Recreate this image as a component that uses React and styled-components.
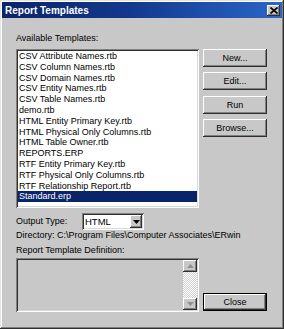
import React from "react";
import styled, { createGlobalStyle } from "styled-components";

const BG = "#c8c8c8";

const Global = createGlobalStyle`
  html, body { margin: 0; padding: 0; background: ${BG}; }
  body { font-family: "Liberation Sans", Arial, sans-serif; }
  * { box-sizing: border-box; }
`;

const Dialog = styled.div`
  width: 284px;
  height: 329px;
  background: ${BG};
  padding: 2px;
  box-shadow: inset -1px -1px #303030, inset 1px 1px #e4e4e4,
    inset -2px -2px #808080, inset 2px 2px #ffffff;
  display: flex;
  flex-direction: column;
`;

const TitleBar = styled.div`
  height: 16px;
  display: flex;
  align-items: center;
  justify-content: space-between;
  padding: 0 2px 0 3px;
  background: linear-gradient(to right, #0a246a 0%, #12388c 45%, #2a66c8 100%);
  color: #fff;
  font-weight: bold;
  font-size: 10px;
`;

const CloseBox = styled.div`
  width: 13px;
  height: 11px;
  background: ${BG};
  box-shadow: inset -1px -1px #303030, inset 1px 1px #ffffff,
    inset -2px -2px #808080;
  display: flex;
  align-items: center;
  justify-content: center;
`;

const Body = styled.div`
  display: flex;
  padding: 15px 0 0 14px;
  font-size: 9px;
  color: #000;
`;

const LeftCol = styled.div`
  width: 183px;
  display: flex;
  flex-direction: column;
`;

const Label = styled.div`
  line-height: 11px;
  height: 11px;
  white-space: nowrap;
  margin-top: ${(p) => p.$mt || 0}px;
`;

const Sunken = styled.div`
  background: ${(p) => p.$bg || "#fff"};
  padding: 2px;
  box-shadow: inset 1px 1px #808080, inset -1px -1px #ffffff,
    inset 2px 2px #303030, inset -2px -2px #d8d8d8;
`;

const List = styled(Sunken)`
  margin-top: 5px;
  height: 159px;
  overflow: hidden;
`;

const Item = styled.div`
  height: 10.8px;
  line-height: 10.8px;
  padding-left: 1px;
  white-space: nowrap;
  background: ${(p) => (p.$sel ? "#0a246a" : "transparent")};
  color: ${(p) => (p.$sel ? "#fff" : "#000")};
`;

const OutputRow = styled.div`
  margin-top: 5px;
  height: 17px;
  display: flex;
  align-items: center;
`;

const OutLabel = styled.div`
  width: 66px;
  line-height: 11px;
`;

const Select = styled(Sunken)`
  width: 62px;
  height: 17px;
  display: flex;
  align-items: stretch;
  padding: 2px;
`;

const SelectText = styled.div`
  flex: 1;
  padding-left: 1px;
  font-size: 9.5px;
  line-height: 13px;
`;

const Raised = styled.div`
  background: ${BG};
  box-shadow: inset -1px -1px #303030, inset 1px 1px #ffffff,
    inset -2px -2px #808080;
`;

const ArrowBtn = styled(Raised)`
  width: 12px;
  display: flex;
  align-items: center;
  justify-content: center;
`;

const TextBox = styled(Sunken)`
  margin-top: 2px;
  height: 54px;
  display: flex;
  justify-content: flex-end;
`;

const ScrollBar = styled.div`
  width: 14px;
  display: flex;
  flex-direction: column;
  background: repeating-conic-gradient(#ffffff 0 25%, #d0d0d0 0 50%) 0 0 / 2px 2px;
`;

const ScrollBtn = styled(Raised)`
  height: 12px;
  display: flex;
  align-items: center;
  justify-content: center;
`;

const Track = styled.div`
  flex: 1;
`;

const RightCol = styled.div`
  width: 64px;
  margin-left: 4px;
  padding-top: 16px;
  display: flex;
  flex-direction: column;
  gap: 5.4px;
`;

const Button = styled(Raised)`
  height: 18px;
  display: flex;
  align-items: center;
  justify-content: center;
  font-size: 9px;
  margin-top: ${(p) => (p.$bottom ? "auto" : "0")};
  margin-bottom: ${(p) => (p.$bottom ? "1px" : "0")};
  ${(p) =>
    p.$default &&
    `box-shadow: inset 0 0 0 1px #000, inset -2px -2px #303030, inset 2px 2px #ffffff, inset -3px -3px #808080;`}
`;

const Tri = ({ dir = "down", color = "#000" }) => (
  <svg width="7" height="4" viewBox="0 0 7 4">
    {dir === "down" ? (
      <polygon points="0,0 7,0 3.5,4" fill={color} />
    ) : (
      <polygon points="0,4 7,4 3.5,0" fill={color} />
    )}
  </svg>
);

const items = [
  "CSV Attribute Names.rtb",
  "CSV Column Names.rtb",
  "CSV Domain Names.rtb",
  "CSV Entity Names.rtb",
  "CSV Table Names.rtb",
  "demo.rtb",
  "HTML Entity Primary Key.rtb",
  "HTML Physical Only Columns.rtb",
  "HTML Table Owner.rtb",
  "REPORTS.ERP",
  "RTF Entity Primary Key.rtb",
  "RTF Physical Only Columns.rtb",
  "RTF Relationship Report.rtb",
  "Standard.erp",
];

export default function App() {
  return (
    <>
      <Global />
      <Dialog>
        <TitleBar>
          <span>Report Templates</span>
          <CloseBox>
            <svg width="8" height="7" viewBox="0 0 8 7">
              <path d="M0.5 0.5 L7.5 6.5 M7.5 0.5 L0.5 6.5" stroke="#000" strokeWidth="1.6" />
            </svg>
          </CloseBox>
        </TitleBar>
        <Body>
          <LeftCol>
            <Label>Available Templates:</Label>
            <List>
              {items.map((t) => (
                <Item key={t} $sel={t === "Standard.erp"}>
                  {t}
                </Item>
              ))}
            </List>
            <OutputRow>
              <OutLabel>Output Type:</OutLabel>
              <Select>
                <SelectText>HTML</SelectText>
                <ArrowBtn>
                  <Tri />
                </ArrowBtn>
              </Select>
            </OutputRow>
            <Label>Directory: C:\Program Files\Computer Associates\ERwin</Label>
            <Label $mt={4}>Report Template Definition:</Label>
            <TextBox $bg={BG}>
              <ScrollBar>
                <ScrollBtn>
                  <Tri dir="up" color="#909090" />
                </ScrollBtn>
                <Track />
                <ScrollBtn>
                  <Tri color="#909090" />
                </ScrollBtn>
              </ScrollBar>
            </TextBox>
          </LeftCol>
          <RightCol>
            <Button>New...</Button>
            <Button>Edit...</Button>
            <Button>Run</Button>
            <Button>Browse...</Button>
            <Button $bottom $default>
              Close
            </Button>
          </RightCol>
        </Body>
      </Dialog>
    </>
  );
}
